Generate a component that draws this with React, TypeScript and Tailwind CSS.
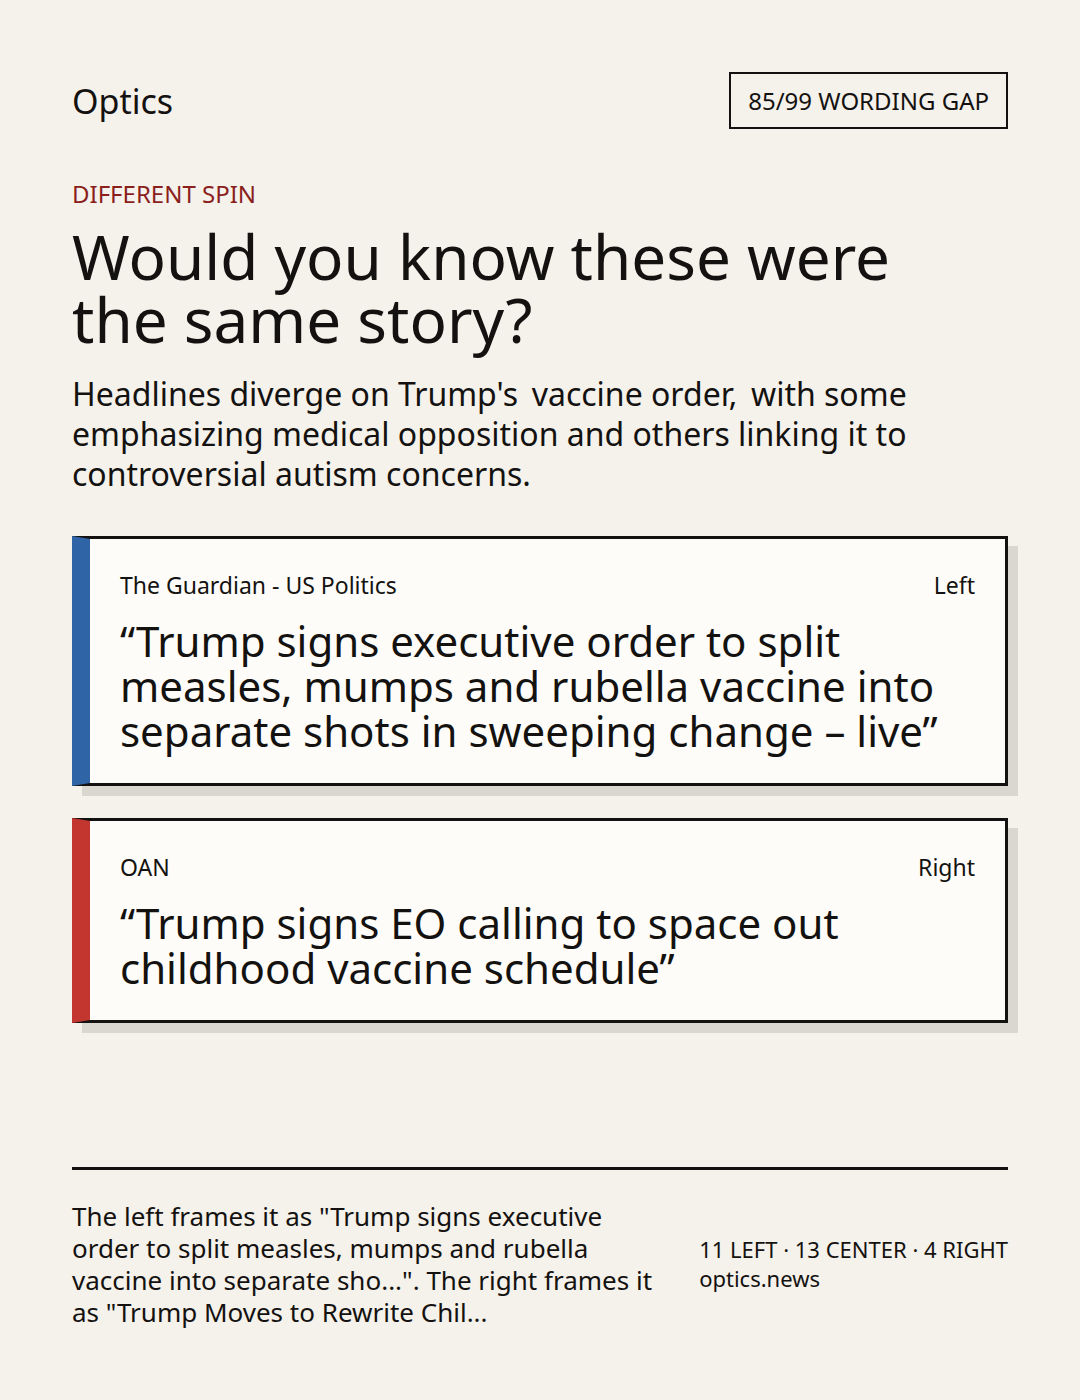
export default function App() {
  return (
    <div
      className="flex h-[1400px] w-[1080px] flex-col bg-[#f5f1eb] p-[72px] text-[#141210]"
      style={{ fontFamily: '"Noto Sans", "Open Sans", sans-serif' }}
    >
      <header className="flex items-start justify-between">
        <div className="pt-[8px] text-[34px] leading-[42px]">Optics</div>
        <div className="border-2 border-[#141210] px-[17px] py-[12px] text-[24px] leading-[29px]">
          85/99 WORDING GAP
        </div>
      </header>

      <div className="mt-[50px] text-[24px] leading-[30px] text-[#8a1f1c]">DIFFERENT SPIN</div>
      <h1 className="mt-[16px] text-[62px] leading-[63px]">
        Would you know these were
        <br />
        the same story?
      </h1>
      <p className="mt-[23px] text-[32px] leading-[40px]">
        {'Headlines diverge on Trump\u2019s\u2009 vaccine order,\u2009 with some emphasizing medical opposition and others linking it to controversial autism concerns.'.replace('\u2019', "'")}
      </p>

      <div className="mt-[42px] flex flex-col gap-[32px]">
        <Card
          source="The Guardian - US Politics"
          lean="Left"
          bar="border-l-[#2f64a6]"
          headline="“Trump signs executive order to split measles, mumps and rubella vaccine into separate shots in sweeping change – live”"
        />
        <Card
          source="OAN"
          lean="Right"
          bar="border-l-[#c33630]"
          headline="“Trump signs EO calling to space out childhood vaccine schedule”"
        />
      </div>

      <footer className="mt-auto border-t-[3px] border-[#141210] pt-[30px]">
        <div className="flex items-center justify-between gap-[40px]">
          <p className="w-[590px] text-[26px] leading-[32px]">
            The left frames it as "Trump signs executive order to split measles, mumps and rubella vaccine into separate
            sho...". The right frames it as "Trump Moves to Rewrite Chil...
          </p>
          <div className="whitespace-nowrap text-[22px] leading-[29px]">
            <div>11 LEFT · 13 CENTER · 4 RIGHT</div>
            <div>optics.news</div>
          </div>
        </div>
      </footer>
    </div>
  )
}

function Card({ source, lean, bar, headline }: { source: string; lean: string; bar: string; headline: string }) {
  return (
    <div
      className={`border-[3px] border-l-[18px] border-[#141210] ${bar} bg-[#fdfcf8] px-[30px] pb-[30px] pt-[30px] shadow-[10px_10px_0_#dad7d0]`}
    >
      <div className="flex items-center justify-between text-[23px] leading-[32px]">
        <span>{source}</span>
        <span>{lean}</span>
      </div>
      <div className="mt-[17px] pr-[20px] text-[42px] leading-[45px]">{headline}</div>
    </div>
  )
}
